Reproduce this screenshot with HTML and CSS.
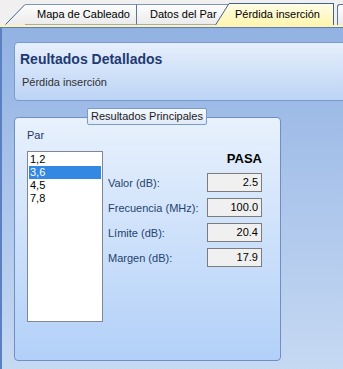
FILE: index.html
```html
<!DOCTYPE html>
<html lang="es">

<head>
    <meta charset="UTF-8">
    <meta name="viewport" content="width=device-width, initial-scale=1.0">
    <title>Resultados Detallados</title>
    <link rel="stylesheet" href="styles.css">
</head>

<body>
    <div id="window">
        <!-- pestañas -->
        <div class="tabstrip">
            <div class="tab tab-first">
                <svg class="slant" width="20" height="21" viewBox="0 0 20 21">
                    <defs>
                        <linearGradient id="g-tab" x1="0" y1="0" x2="0" y2="1">
                            <stop offset="0" stop-color="#fdfdfd" />
                            <stop offset="1" stop-color="#ebebeb" />
                        </linearGradient>
                    </defs>
                    <polygon points="0,21 20,0 20,21" fill="url(#g-tab)" />
                    <line x1="0.5" y1="20.5" x2="20" y2="0.5" stroke="#44608c" stroke-width="1" />
                </svg>
                <span class="tab-label">Mapa de Cableado</span>
            </div>
            <div class="tab tab-mid">
                <span class="tab-label">Datos del Par</span>
            </div>
            <div class="tab tab-active">
                <svg class="slant" width="14" height="22" viewBox="0 0 14 22">
                    <defs>
                        <linearGradient id="g-act" x1="0" y1="0" x2="0" y2="1">
                            <stop offset="0" stop-color="#fffde6" />
                            <stop offset="1" stop-color="#fff5b0" />
                        </linearGradient>
                    </defs>
                    <polygon points="0,22 14,0 14,22" fill="url(#g-act)" />
                    <line x1="0.5" y1="22" x2="14" y2="0.5" stroke="#44608c" stroke-width="1" />
                </svg>
                <span class="tab-label">Pérdida inserción</span>
            </div>
            <div class="tab tab-next"></div>
        </div>
        <div class="tabline"></div>

        <div class="panel">
            <div class="header">
                <h1>Reultados Detallados</h1>
                <p>Pérdida inserción</p>
            </div>

            <div class="group">
                <div class="group-title">Resultados Principales</div>
                <div class="par-label">Par</div>
                <div class="group-body">
                    <ul class="listbox">
                        <li>1,2</li>
                        <li class="selected">3,6</li>
                        <li>4,5</li>
                        <li>7,8</li>
                    </ul>
                    <div class="results">
                        <div class="status">PASA</div>
                        <div class="row">
                            <span class="label">Valor (dB):</span>
                            <span class="value">2.5</span>
                        </div>
                        <div class="row">
                            <span class="label">Frecuencia (MHz):</span>
                            <span class="value">100.0</span>
                        </div>
                        <div class="row">
                            <span class="label">Límite (dB):</span>
                            <span class="value">20.4</span>
                        </div>
                        <div class="row">
                            <span class="label">Margen (dB):</span>
                            <span class="value">17.9</span>
                        </div>
                    </div>
                </div>
            </div>
        </div>
    </div>
</body>

</html>
```

FILE: styles.css
```css
* {
    margin: 0;
    padding: 0;
    box-sizing: border-box;
}

ul {
    list-style: none;
}

body {
    width: 343px;
    height: 369px;
    overflow: hidden;
    font-family: "Liberation Sans", Arial, sans-serif;
    font-size: 11px;
    color: #000;
}

#window {
    display: flex;
    flex-direction: column;
    height: 369px;
    overflow: hidden;
}

/* pestañas */
.tabstrip {
    display: flex;
    align-items: flex-end;
    height: 25px;
    padding-left: 5px;
    background: #f0f0f0;
}

.tab {
    display: flex;
    align-items: flex-end;
    height: 21px;
}

.tab .slant {
    display: block;
    flex: none;
}

.tab-label {
    display: block;
    height: 21px;
    line-height: 19px;
    white-space: nowrap;
    border-top: 1px solid #7d95b8;
    background: linear-gradient(#fdfdfd, #ebebeb);
}

.tab-first .tab-label {
    width: 112px;
    padding-left: 12px;
    border-right: 1px solid #5f7396;
    border-bottom: 1px solid #a3acbb;
}

.tab-mid .tab-label {
    width: 92px;
    padding-left: 13px;
    overflow: hidden;
    border-bottom: 1px solid #a3acbb;
}

.tab-active {
    height: 22px;
    margin-left: -14px;
    position: relative;
    z-index: 1;
}

.tab-active .tab-label {
    height: 22px;
    line-height: 21px;
    width: 105px;
    padding-left: 6px;
    border-top: 1px solid #44608c;
    border-right: 1px solid #44608c;
    background: linear-gradient(#fffde6, #fff5b0);
}

.tab-next {
    width: 10px;
    margin-left: 3px;
    border-top: 1px solid #5f7396;
    border-left: 1px solid #5f7396;
    border-radius: 3px 0 0 0;
    background: linear-gradient(#fdfdfd, #ebebeb);
}

.tabline {
    height: 3px;
    background: #fff5b0;
    border-bottom: 1px solid #5d7db3;
}

/* panel azul */
.panel {
    flex: 1;
    padding: 14px 0 0 12px;
    overflow: hidden;
    border-left: 2px solid #5b80c0;
    background: linear-gradient(#92b2e3, #c6d9f3);
}

.header {
    height: 59px;
    margin-right: -8px;
    padding: 8px 0 0 5px;
    border: 1px solid #7b9bcf;
    border-radius: 4px 0 0 4px;
    background: linear-gradient(#e6effc, #bcd4f5);
}

.header h1 {
    font-size: 14px;
    line-height: 17px;
    font-weight: bold;
    color: #1f3a70;
}

.header p {
    margin-top: 8px;
    padding-left: 2px;
    line-height: 13px;
    color: #303030;
}

/* grupo de resultados */
.group {
    display: flex;
    flex-direction: column;
    width: 267px;
    height: 244px;
    margin-top: 16px;
    padding-left: 12px;
    border: 1px solid #6f8fc2;
    border-radius: 4px;
    background: linear-gradient(#e8f1fd, #b2d0f8);
}

.group-title {
    align-self: flex-start;
    height: 17px;
    margin: -10px 0 0 60px;
    padding: 0 3px;
    line-height: 15px;
    font-size: 11px;
    color: #1c1c1c;
    border: 1px solid #7d9bc8;
    border-radius: 2px;
    background: linear-gradient(#f5f9fe, #dfeaf8);
}

.par-label {
    margin-top: 4px;
    line-height: 13px;
    color: #1d3766;
}

.group-body {
    display: flex;
    margin-top: 9px;
}

.listbox {
    width: 76px;
    height: 171px;
    padding: 1px;
    background: #fff;
    border: 1px solid #7f8792;
}

.listbox li {
    height: 13px;
    line-height: 13px;
    padding-left: 1px;
}

.listbox .selected {
    background: #3388e4;
    color: #fff;
}

.results {
    width: 154px;
    margin-left: 5px;
}

.status {
    text-align: right;
    font-size: 13px;
    line-height: 15px;
    font-weight: bold;
}

.row {
    display: flex;
    align-items: center;
    justify-content: space-between;
    height: 19px;
    margin-top: 6px;
}

.status + .row {
    margin-top: 7px;
}

.label {
    color: #24436f;
}

.value {
    width: 55px;
    height: 19px;
    padding-right: 3px;
    line-height: 17px;
    text-align: right;
    background: #f0f0f0;
    border: 1px solid #7c7c7c;
}
```
